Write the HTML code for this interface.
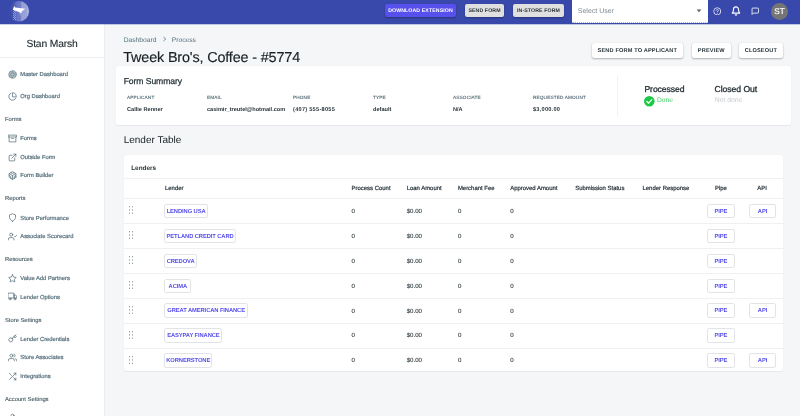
<!DOCTYPE html>
<html>
<head>
<meta charset="utf-8">
<title>Process</title>
<style>
*{box-sizing:border-box;margin:0;padding:0}
html,body{width:800px;height:416px;overflow:hidden;background:#f4f6f8;font-family:"Liberation Sans",sans-serif;color:#263238}
.abs{position:absolute;white-space:nowrap;line-height:1}
#top,#side,#main{will-change:transform}
body{-webkit-font-smoothing:antialiased;text-rendering:geometricPrecision}
#top{position:absolute;left:0;top:0;width:800px;height:24px;background:#3949ab;box-shadow:0 .6px 0 rgba(57,73,171,.45);z-index:5}
#side{position:absolute;left:0;top:24px;width:105px;height:392px;overflow:hidden;background:#fff;border-right:1px solid #ebedef;z-index:3}
.uname{left:0;width:104px;text-align:center;top:16.4px;font-size:10.3px;letter-spacing:-.15px;color:#222c31;-webkit-text-stroke:.12px #222c31}
.sdiv{position:absolute;left:0;top:33.3px;width:104px;height:1px;background:#eceef0}
.sh{left:5px;font-size:5.8px;color:#455a64;-webkit-text-stroke:.12px #455a64}
.si{left:20.3px;font-size:5.8px;color:#546e7a;-webkit-text-stroke:.2px #546e7a}
.ic{position:absolute;left:8px;width:9px;height:9px}
.ic svg{width:9px;height:9px;fill:none;stroke:#4d6672;stroke-width:1.85;stroke-linecap:round;stroke-linejoin:round;display:block}
#main{position:absolute;left:105px;top:24px;width:695px;height:392px;overflow:hidden;background:#f4f6f8}
.bc{font-size:6.7px;color:#546e7a}
.card{position:absolute;background:#fff;border-radius:2px;box-shadow:0 0 1px rgba(63,63,68,.05),0 .5px 1px rgba(63,63,68,.07)}
.lab{font-size:4.7px;color:#4a626d;letter-spacing:.15px;-webkit-text-stroke:.1px #4a626d}
.val{font-size:5.6px;color:#263238;font-weight:bold}
.btn{position:absolute;white-space:nowrap;line-height:1;text-align:center;font-weight:bold;border-radius:2px}
.th{font-size:5.95px;color:#263238;-webkit-text-stroke:.2px #263238}
.td{font-size:6.1px;color:#263238;-webkit-text-stroke:.08px #263238}
.ob{position:absolute;height:14.4px;line-height:14.2px;border:1px solid #e1e3e6;border-radius:2.2px;background:#fff;color:#5850ec;font-size:5.8px;font-weight:bold;letter-spacing:-.1px;overflow:hidden;text-align:center;white-space:nowrap}
</style>
</head>
<body>
<div id="top">
  <svg style="position:absolute;left:8px;top:1px;width:22px;height:22px" viewBox="8 1 22 22">
    <defs><linearGradient id="lg" gradientUnits="userSpaceOnUse" x1="8.6" y1="0" x2="29.2" y2="0"><stop offset="0" stop-color="#3b4bab"/><stop offset=".2" stop-color="#4151ae"/><stop offset=".3" stop-color="#5562b9"/><stop offset=".42" stop-color="#6a76c5"/><stop offset=".6" stop-color="#727ec9"/><stop offset=".63" stop-color="#949dd5"/><stop offset=".88" stop-color="#9ca5d9"/><stop offset=".91" stop-color="#abb3e0"/><stop offset="1" stop-color="#abb3e0"/></linearGradient>
    <pattern id="dp" x="12" y="10" width="2" height="2" patternUnits="userSpaceOnUse"><rect x="0" y="0" width="1" height="1" fill="#a4ace0"/><rect x="1" y="1" width="1" height="1" fill="#a4ace0"/></pattern>
    <clipPath id="cc"><circle cx="18.9" cy="11.3" r="10.2"/></clipPath></defs>
    <circle cx="18.9" cy="11.3" r="10.2" fill="url(#lg)"/>
    <rect x="13" y="10" width="3" height="10" fill="url(#dp)" clip-path="url(#cc)" opacity=".75"/>
    <path d="M13.6 7.5L14.3 6L15.2 7.4L25.2 8.8L22 11.3L20.9 13.6L19.6 12.2L15.4 10.8L12.8 9.8Z" fill="#fff"/>
    <path d="M20.9 13.6L20.2 16L19.4 13" fill="#c9cef0" opacity=".6"/>
  </svg>
  <div class="btn" style="left:385px;top:4px;width:71px;height:13px;background:#5850ec;color:#fff;font-size:5.2px;line-height:15.9px;letter-spacing:.12px;overflow:hidden;box-shadow:0 1px 2px rgba(0,0,0,.3)">DOWNLOAD EXTENSION</div>
  <div class="btn" style="left:465px;top:4px;width:39px;height:13px;background:#e0e0e0;color:#263238;font-size:5.2px;line-height:15.9px;letter-spacing:.12px;overflow:hidden;box-shadow:0 1px 2px rgba(0,0,0,.3)">SEND FORM</div>
  <div class="btn" style="left:513px;top:4px;width:51px;height:13px;background:#e0e0e0;color:#263238;font-size:5.2px;line-height:15.9px;letter-spacing:.12px;overflow:hidden;box-shadow:0 1px 2px rgba(0,0,0,.3)">IN-STORE FORM</div>
  <div style="position:absolute;left:572px;top:0;width:136px;height:23px;background:#fff;border-bottom:1px dotted #aeb4dc"></div>
  <div class="abs" style="left:577.8px;top:8.1px;font-size:7px;color:#7f8a91">Select User</div>
  <svg style="position:absolute;left:696px;top:9px;width:6px;height:4px" viewBox="0 0 6 4"><path d="M0.6 0.6h4.8L3 3.2z" fill="#616161"/></svg>
  <svg style="position:absolute;left:712.5px;top:6.7px;width:8.6px;height:8.6px" viewBox="0 0 24 24" fill="none" stroke="#fff" stroke-width="2" stroke-linecap="round" stroke-linejoin="round"><circle cx="12" cy="12" r="10"/><path d="M9.09 9a3 3 0 0 1 5.83 1c0 2-3 3-3 3"/><line x1="12" y1="17" x2="12" y2="17.2"/></svg>
  <svg style="position:absolute;left:731px;top:5.8px;width:10px;height:10px" viewBox="0 0 24 24" fill="none" stroke="#fff" stroke-width="2.6" stroke-linecap="round" stroke-linejoin="round"><path d="M18 8A6 6 0 0 0 6 8c0 7-3 9-3 9h18s-3-2-3-9"/><path d="M13.73 21a2 2 0 0 1-3.46 0"/></svg>
  <svg style="position:absolute;left:750.8px;top:7px;width:8.6px;height:8.6px" viewBox="0 0 24 24" fill="none" stroke="#fff" stroke-width="2.3" stroke-linecap="round" stroke-linejoin="round"><path d="M21 15a2 2 0 0 1-2 2H7l-4 4V5a2 2 0 0 1 2-2h14a2 2 0 0 1 2 2z"/></svg>
  <div style="position:absolute;left:771px;top:2.5px;width:17px;height:17px;border-radius:50%;background:#757575;color:#fff;font-size:8.2px;line-height:17.6px;text-align:center;overflow:hidden;-webkit-text-stroke:.2px #fff">ST</div>
</div>
<div id="side">
  <div class="abs uname">Stan Marsh</div>
  <div class="sdiv"></div>
  <div class="ic" style="top:45.5px"><svg viewBox="0 0 24 24" style="stroke-width:2.2;stroke:#7b909a;fill:rgba(84,110,122,.35)"><circle cx="12" cy="12" r="10"/><line x1="14.31" y1="8" x2="20.05" y2="17.94"/><line x1="9.69" y1="8" x2="21.17" y2="8"/><line x1="7.38" y1="12" x2="13.12" y2="2.06"/><line x1="9.69" y1="16" x2="3.95" y2="6.06"/><line x1="14.31" y1="16" x2="2.83" y2="16"/><line x1="16.62" y1="12" x2="10.88" y2="21.94"/></svg></div><div class="abs si" style="top:48.8px">Master Dashboard</div>
  <div class="ic" style="top:67.8px"><svg viewBox="0 0 24 24"><path d="M21.21 15.89A10 10 0 1 1 8 2.83"/><path d="M22 12A10 10 0 0 0 12 2v10z"/></svg></div><div class="abs si" style="top:71.1px">Org Dashboard</div>
  <div class="abs sh" style="top:93.6px">Forms</div>
  <div class="ic" style="top:109.5px"><svg viewBox="0 0 24 24"><polyline points="21 8 21 21 3 21 3 8"/><rect x="1" y="3" width="22" height="5"/><line x1="10" y1="12" x2="14" y2="12"/></svg></div><div class="abs si" style="top:112.8px">Forms</div>
  <div class="ic" style="top:128.5px"><svg viewBox="0 0 24 24"><path d="M18 13v6a2 2 0 0 1-2 2H5a2 2 0 0 1-2-2V8a2 2 0 0 1 2-2h6"/><polyline points="15 3 21 3 21 9"/><line x1="10" y1="14" x2="21" y2="3"/></svg></div><div class="abs si" style="top:131.8px">Outside Form</div>
  <div class="ic" style="top:147.0px"><svg viewBox="0 0 24 24"><path d="M21 16V8a2 2 0 0 0-1-1.73l-7-4a2 2 0 0 0-2 0l-7 4A2 2 0 0 0 3 8v8a2 2 0 0 0 1 1.73l7 4a2 2 0 0 0 2 0l7-4A2 2 0 0 0 21 16z"/><polyline points="7.5 4.21 12 6.81 16.5 4.21"/><polyline points="7.5 19.79 7.5 14.6 3 12"/><polyline points="21 12 16.5 14.6 16.5 19.79"/><polyline points="3.27 6.96 12 12.01 20.73 6.96"/><line x1="12" y1="22.08" x2="12" y2="12"/></svg></div><div class="abs si" style="top:150.3px">Form Builder</div>
  <div class="abs sh" style="top:173.3px">Reports</div>
  <div class="ic" style="top:189.2px"><svg viewBox="0 0 24 24"><path d="M12 22s8-4 8-10V5l-8-3-8 3v7c0 6 8 10 8 10z"/></svg></div><div class="abs si" style="top:192.5px">Store Performance</div>
  <div class="ic" style="top:207.5px"><svg viewBox="0 0 24 24"><path d="M16 21v-2a4 4 0 0 0-4-4H5a4 4 0 0 0-4 4v2"/><circle cx="8.5" cy="7" r="4"/><polyline points="17 11 19 13 23 9"/></svg></div><div class="abs si" style="top:210.8px">Associate Scorecard</div>
  <div class="abs sh" style="top:233.8px">Resources</div>
  <div class="ic" style="top:249.8px"><svg viewBox="0 0 24 24"><polygon points="12 2 15.09 8.26 22 9.27 17 14.14 18.18 21.02 12 17.77 5.82 21.02 7 14.14 2 9.27 8.91 8.26 12 2"/></svg></div><div class="abs si" style="top:253.1px">Value Add Partners</div>
  <div class="ic" style="top:268.2px"><svg viewBox="0 0 24 24"><rect x="1" y="3" width="15" height="13"/><polygon points="16 8 20 8 23 11 23 16 16 16 16 8"/><circle cx="5.5" cy="18.5" r="2.5"/><circle cx="18.5" cy="18.5" r="2.5"/></svg></div><div class="abs si" style="top:271.5px">Lender Options</div>
  <div class="abs sh" style="top:294.5px">Store Settings</div>
  <div class="ic" style="top:310.3px"><svg viewBox="0 0 24 24"><path d="M21 2l-2 2m-7.61 7.61a5.5 5.5 0 1 1-7.778 7.778 5.5 5.5 0 0 1 7.777-7.777zm0 0L15.5 7.5m0 0l3 3L22 7l-3-3m-3.5 3.5L19 4"/></svg></div><div class="abs si" style="top:313.6px">Lender Credentials</div>
  <div class="ic" style="top:328.9px"><svg viewBox="0 0 24 24"><path d="M17 21v-2a4 4 0 0 0-4-4H5a4 4 0 0 0-4 4v2"/><circle cx="9" cy="7" r="4"/><path d="M23 21v-2a4 4 0 0 0-3-3.87"/><path d="M16 3.13a4 4 0 0 1 0 7.75"/></svg></div><div class="abs si" style="top:332.2px">Store Associates</div>
  <div class="ic" style="top:347.7px"><svg viewBox="0 0 24 24"><polyline points="16 3 21 3 21 8"/><line x1="4" y1="20" x2="21" y2="3"/><polyline points="21 16 21 21 16 21"/><line x1="15" y1="15" x2="21" y2="21"/><line x1="4" y1="4" x2="9" y2="9"/></svg></div><div class="abs si" style="top:351.0px">Integrations</div>
  <div class="abs sh" style="top:373.5px">Account Settings</div>
  <div class="ic" style="top:388.7px"><svg viewBox="0 0 24 24"><path d="M20 21v-2a4 4 0 0 0-4-4H8a4 4 0 0 0-4 4v2"/><circle cx="12" cy="7" r="4"/></svg></div><div class="abs si" style="top:392.6px">Account</div>
</div>
<div id="main">
<div class="abs bc" style="left:18.7px;top:14.2px">Dashboard</div>
<svg style="position:absolute;left:56.5px;top:12.3px;width:5px;height:6px" viewBox="0 0 5 6"><path d="M1.5 1L3.7 3L1.5 5" fill="none" stroke="#546e7a" stroke-width=".8"/></svg>
<div class="abs bc" style="left:66.8px;top:14.2px">Process</div>
<div class="abs" style="left:18.2px;top:26.5px;font-size:14.4px;letter-spacing:-.15px;color:#182024;-webkit-text-stroke:.15px #182024">Tweek Bro's, Coffee - #5774</div>
<div class="btn" style="left:486.5px;top:19.0px;width:91.7px;height:14.5px;line-height:16.9px;background:#fff;color:#263238;font-size:5.6px;letter-spacing:.15px;overflow:hidden;box-shadow:0 1px 2px rgba(0,0,0,.28),0 0 1px rgba(0,0,0,.15)">SEND FORM TO APPLICANT</div>
<div class="btn" style="left:587px;top:19.0px;width:38.6px;height:14.5px;line-height:16.9px;background:#fff;color:#263238;font-size:5.6px;letter-spacing:.15px;overflow:hidden;box-shadow:0 1px 2px rgba(0,0,0,.28),0 0 1px rgba(0,0,0,.15)">PREVIEW</div>
<div class="btn" style="left:633.7px;top:19.0px;width:44.3px;height:14.5px;line-height:16.9px;background:#fff;color:#263238;font-size:5.6px;letter-spacing:.15px;overflow:hidden;box-shadow:0 1px 2px rgba(0,0,0,.28),0 0 1px rgba(0,0,0,.15)">CLOSEOUT</div>
<div class="card" style="left:10.5px;top:42px;width:675.7px;height:58.5px"></div>
<div class="abs" style="left:18.7px;top:53.3px;font-size:8.6px;letter-spacing:-.08px;color:#263238;-webkit-text-stroke:.25px #263238">Form Summary</div>
<div class="abs lab" style="left:22.0px;top:72.2px">APPLICANT</div><div class="abs val" style="left:22.0px;top:83.8px">Callie Renner</div>
<div class="abs lab" style="left:102.0px;top:72.2px">EMAIL</div><div class="abs val" style="left:102.0px;top:83.8px">casimir_treutel@hotmail.com</div>
<div class="abs lab" style="left:188.0px;top:72.2px">PHONE</div><div class="abs val" style="left:188.0px;top:83.8px;letter-spacing:.27px">(407) 555-8055</div>
<div class="abs lab" style="left:268.0px;top:72.2px">TYPE</div><div class="abs val" style="left:268.0px;top:83.8px">default</div>
<div class="abs lab" style="left:348.0px;top:72.2px">ASSOCIATE</div><div class="abs val" style="left:348.0px;top:83.8px">N/A</div>
<div class="abs lab" style="left:428.0px;top:72.2px">REQUESTED AMOUNT</div><div class="abs val" style="left:428.0px;top:83.8px;letter-spacing:.25px">$3,000.00</div>
<div style="position:absolute;left:511.9px;top:51.5px;width:1px;height:40.5px;background:#f1f2f4"></div>
<div class="abs" style="left:539.4px;top:60.5px;font-size:8.6px;letter-spacing:-.05px;color:#263238;-webkit-text-stroke:.32px #263238">Processed</div>
<div class="abs" style="left:609.6px;top:60.5px;font-size:8.6px;letter-spacing:-.05px;color:#263238;-webkit-text-stroke:.32px #263238">Closed Out</div>
<svg style="position:absolute;left:539.3px;top:72.0px;width:10.6px;height:10.6px" viewBox="0 0 24 24"><circle cx="12" cy="12" r="12" fill="#1bc943"/><path d="M6.5 12.5l3.8 3.8 7.5-8" fill="none" stroke="#fff" stroke-width="2.8" stroke-linecap="round" stroke-linejoin="round"/></svg>
<div class="abs" style="left:552.0px;top:73.6px;font-size:6.7px;color:#3fd163">Done</div>
<div class="abs" style="left:609.8px;top:73.6px;font-size:6.8px;color:#c5cace">Not done</div>
<div class="abs" style="left:18.7px;top:111.8px;font-size:10px;color:#182024">Lender Table</div>
<div class="card" style="left:18.5px;top:131.2px;width:659.5px;height:215.8px"></div>
<div class="abs" style="left:26.2px;top:142.1px;font-size:6.4px;font-weight:bold;color:#263238">Lenders</div>
<div style="position:absolute;left:18.5px;top:154.0px;width:659.5px;height:1px;background:#eef0f2"></div>
<div class="abs th" style="left:60.0px;top:163.2px">Lender</div>
<div class="abs th" style="left:246.6px;top:163.2px">Process Count</div>
<div class="abs th" style="left:301.7px;top:163.2px">Loan Amount</div>
<div class="abs th" style="left:352.9px;top:163.2px">Merchant Fee</div>
<div class="abs th" style="left:405.2px;top:163.2px">Approved Amount</div>
<div class="abs th" style="left:470.2px;top:163.2px">Submission Status</div>
<div class="abs th" style="left:537.5px;top:163.2px">Lender Response</div>
<div class="abs th" style="left:610.0px;top:163.2px">Pipe</div>
<div class="abs th" style="left:652.3px;top:163.2px">API</div>
<div style="position:absolute;left:18.5px;top:174.4px;width:659.5px;height:1px;background:#eef0f2"></div>
<svg style="position:absolute;left:23px;top:182px;width:6px;height:9px" viewBox="0 0 6 9" fill="#7d8f98"><rect x="1" y="0.2" width="1" height="1.1"/><rect x="1" y="3.4" width="1" height="1.1"/><rect x="1" y="6.7" width="1" height="1.1"/><rect x="4" y="0.2" width="1" height="1.1"/><rect x="4" y="3.4" width="1" height="1.1"/><rect x="4" y="6.7" width="1" height="1.1"/></svg>
<div class="ob" style="left:59.4px;top:179.8px;width:43.4px">LENDING USA</div>
<div class="abs td" style="left:246.6px;top:184.6px">0</div>
<div class="abs td" style="left:301.7px;top:184.6px">$0.00</div>
<div class="abs td" style="left:352.9px;top:184.6px">0</div>
<div class="abs td" style="left:405.2px;top:184.6px">0</div>
<div class="ob" style="left:602.4px;top:179.8px;width:27.2px">PIPE</div>
<div class="ob" style="left:644.2px;top:179.8px;width:26.6px">API</div>
<div style="position:absolute;left:18.5px;top:199.3px;width:659.5px;height:1px;background:#eef0f2"></div>
<svg style="position:absolute;left:23px;top:207px;width:6px;height:9px" viewBox="0 0 6 9" fill="#7d8f98"><rect x="1" y="0.2" width="1" height="1.1"/><rect x="1" y="3.4" width="1" height="1.1"/><rect x="1" y="6.7" width="1" height="1.1"/><rect x="4" y="0.2" width="1" height="1.1"/><rect x="4" y="3.4" width="1" height="1.1"/><rect x="4" y="6.7" width="1" height="1.1"/></svg>
<div class="ob" style="left:59.4px;top:204.7px;width:71.4px">PETLAND CREDIT CARD</div>
<div class="abs td" style="left:246.6px;top:209.5px">0</div>
<div class="abs td" style="left:301.7px;top:209.5px">$0.00</div>
<div class="abs td" style="left:352.9px;top:209.5px">0</div>
<div class="abs td" style="left:405.2px;top:209.5px">0</div>
<div class="ob" style="left:602.4px;top:204.7px;width:27.2px">PIPE</div>
<div style="position:absolute;left:18.5px;top:224.2px;width:659.5px;height:1px;background:#eef0f2"></div>
<svg style="position:absolute;left:23px;top:232px;width:6px;height:9px" viewBox="0 0 6 9" fill="#7d8f98"><rect x="1" y="0.2" width="1" height="1.1"/><rect x="1" y="3.4" width="1" height="1.1"/><rect x="1" y="6.7" width="1" height="1.1"/><rect x="4" y="0.2" width="1" height="1.1"/><rect x="4" y="3.4" width="1" height="1.1"/><rect x="4" y="6.7" width="1" height="1.1"/></svg>
<div class="ob" style="left:59.4px;top:229.6px;width:32.4px">CREDOVA</div>
<div class="abs td" style="left:246.6px;top:235.0px">0</div>
<div class="abs td" style="left:301.7px;top:235.0px">$0.00</div>
<div class="abs td" style="left:352.9px;top:235.0px">0</div>
<div class="abs td" style="left:405.2px;top:235.0px">0</div>
<div class="ob" style="left:602.4px;top:229.6px;width:27.2px">PIPE</div>
<div style="position:absolute;left:18.5px;top:249.1px;width:659.5px;height:1px;background:#eef0f2"></div>
<svg style="position:absolute;left:23px;top:257px;width:6px;height:9px" viewBox="0 0 6 9" fill="#7d8f98"><rect x="1" y="0.2" width="1" height="1.1"/><rect x="1" y="3.4" width="1" height="1.1"/><rect x="1" y="6.7" width="1" height="1.1"/><rect x="4" y="0.2" width="1" height="1.1"/><rect x="4" y="3.4" width="1" height="1.1"/><rect x="4" y="6.7" width="1" height="1.1"/></svg>
<div class="ob" style="left:59.4px;top:254.5px;width:26.9px">ACIMA</div>
<div class="abs td" style="left:246.6px;top:259.9px">0</div>
<div class="abs td" style="left:301.7px;top:259.9px">$0.00</div>
<div class="abs td" style="left:352.9px;top:259.9px">0</div>
<div class="abs td" style="left:405.2px;top:259.9px">0</div>
<div class="ob" style="left:602.4px;top:254.5px;width:27.2px">PIPE</div>
<div style="position:absolute;left:18.5px;top:274.0px;width:659.5px;height:1px;background:#eef0f2"></div>
<svg style="position:absolute;left:23px;top:282px;width:6px;height:9px" viewBox="0 0 6 9" fill="#7d8f98"><rect x="1" y="0.2" width="1" height="1.1"/><rect x="1" y="3.4" width="1" height="1.1"/><rect x="1" y="6.7" width="1" height="1.1"/><rect x="4" y="0.2" width="1" height="1.1"/><rect x="4" y="3.4" width="1" height="1.1"/><rect x="4" y="6.7" width="1" height="1.1"/></svg>
<div class="ob" style="left:59.4px;top:279.4px;width:83.5px">GREAT AMERICAN FINANCE</div>
<div class="abs td" style="left:246.6px;top:284.8px">0</div>
<div class="abs td" style="left:301.7px;top:284.8px">$0.00</div>
<div class="abs td" style="left:352.9px;top:284.8px">0</div>
<div class="abs td" style="left:405.2px;top:284.8px">0</div>
<div class="ob" style="left:602.4px;top:279.4px;width:27.2px">PIPE</div>
<div class="ob" style="left:644.2px;top:279.4px;width:26.6px">API</div>
<div style="position:absolute;left:18.5px;top:298.9px;width:659.5px;height:1px;background:#eef0f2"></div>
<svg style="position:absolute;left:23px;top:307px;width:6px;height:9px" viewBox="0 0 6 9" fill="#7d8f98"><rect x="1" y="0.2" width="1" height="1.1"/><rect x="1" y="3.4" width="1" height="1.1"/><rect x="1" y="6.7" width="1" height="1.1"/><rect x="4" y="0.2" width="1" height="1.1"/><rect x="4" y="3.4" width="1" height="1.1"/><rect x="4" y="6.7" width="1" height="1.1"/></svg>
<div class="ob" style="left:59.4px;top:304.3px;width:58.0px">EASYPAY FINANCE</div>
<div class="abs td" style="left:246.6px;top:309.1px">0</div>
<div class="abs td" style="left:301.7px;top:309.1px">$0.00</div>
<div class="abs td" style="left:352.9px;top:309.1px">0</div>
<div class="abs td" style="left:405.2px;top:309.1px">0</div>
<div class="ob" style="left:602.4px;top:304.3px;width:27.2px">PIPE</div>
<div style="position:absolute;left:18.5px;top:323.8px;width:659.5px;height:1px;background:#eef0f2"></div>
<svg style="position:absolute;left:23px;top:332px;width:6px;height:9px" viewBox="0 0 6 9" fill="#7d8f98"><rect x="1" y="0.2" width="1" height="1.1"/><rect x="1" y="3.4" width="1" height="1.1"/><rect x="1" y="6.7" width="1" height="1.1"/><rect x="4" y="0.2" width="1" height="1.1"/><rect x="4" y="3.4" width="1" height="1.1"/><rect x="4" y="6.7" width="1" height="1.1"/></svg>
<div class="ob" style="left:59.4px;top:329.2px;width:47.7px">KORNERSTONE</div>
<div class="abs td" style="left:246.6px;top:334.0px">0</div>
<div class="abs td" style="left:301.7px;top:334.0px">$0.00</div>
<div class="abs td" style="left:352.9px;top:334.0px">0</div>
<div class="abs td" style="left:405.2px;top:334.0px">0</div>
<div class="ob" style="left:602.4px;top:329.2px;width:27.2px">PIPE</div>
<div class="ob" style="left:644.2px;top:329.2px;width:26.6px">API</div>
</div>
</body>
</html>
